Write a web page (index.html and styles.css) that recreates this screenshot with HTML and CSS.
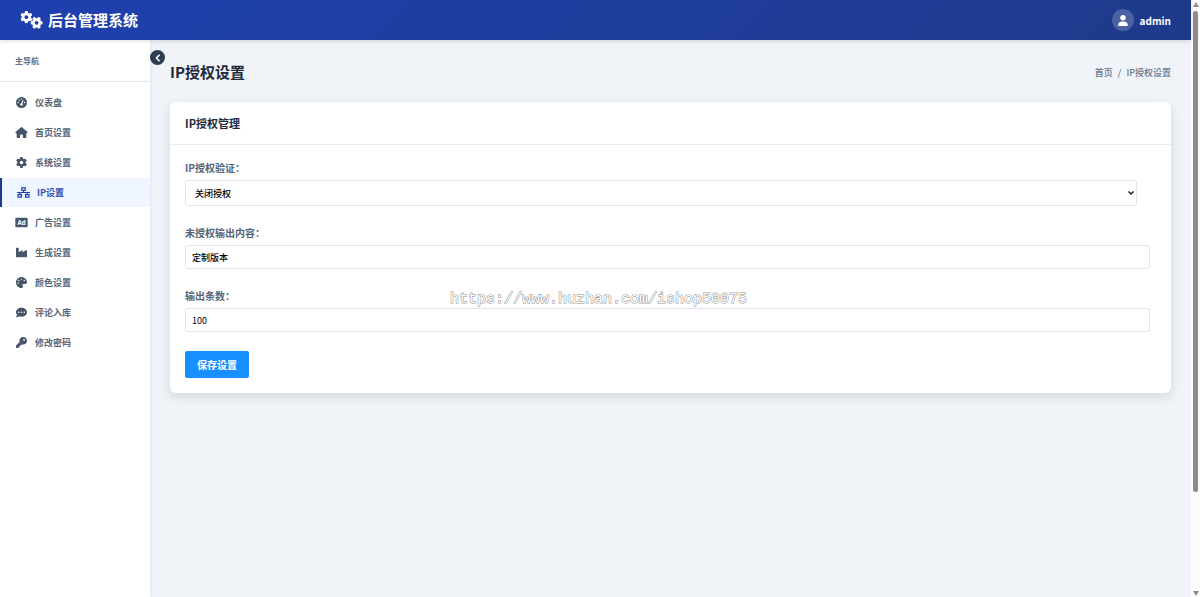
FILE: index.html
```
<!DOCTYPE html>
<html lang="zh-CN">
<head>
<meta charset="utf-8">
<title>IP授权设置 - 后台管理系统</title>
<link rel="stylesheet" href="styles.css">
</head>
<body>
<svg class="defs" aria-hidden="true">
  <symbol id="gear" viewBox="0 0 512 512"><path d="M495.9 166.6c3.2 8.7 .5 18.4-6.4 24.6l-43.3 39.4c1.1 8.3 1.7 16.8 1.7 25.4s-.6 17.1-1.7 25.4l43.3 39.4c6.9 6.2 9.6 15.9 6.4 24.6c-4.4 11.9-9.7 23.3-15.8 34.3l-4.7 8.1c-6.6 11-14 21.4-22.1 31.2c-5.9 7.2-15.7 9.6-24.5 6.8l-55.7-17.7c-13.4 10.3-28.2 18.9-44 25.4l-12.5 57.1c-2 9.1-9 16.3-18.2 17.8c-13.8 2.3-28 3.5-42.5 3.5s-28.7-1.2-42.5-3.5c-9.2-1.5-16.2-8.7-18.2-17.8l-12.5-57.1c-15.8-6.5-30.6-15.1-44-25.4L83.1 425.9c-8.8 2.8-18.6 .3-24.5-6.8c-8.1-9.8-15.5-20.2-22.1-31.2l-4.7-8.1c-6.1-11-11.4-22.4-15.8-34.3c-3.2-8.7-.5-18.4 6.4-24.6l43.3-39.4C64.6 273.1 64 264.6 64 256s.6-17.1 1.7-25.4L22.4 191.2c-6.9-6.2-9.6-15.9-6.4-24.6c4.4-11.9 9.7-23.3 15.8-34.3l4.7-8.1c6.6-11 14-21.4 22.1-31.2c5.9-7.2 15.7-9.6 24.5-6.8l55.7 17.7c13.4-10.3 28.2-18.9 44-25.4l12.5-57.1c2-9.1 9-16.3 18.2-17.8C227.3 1.2 241.5 0 256 0s28.7 1.2 42.5 3.500c9.200 1.500 16.200 8.700 18.200 17.800l12.500 57.100c15.800 6.500 30.600 15.100 44 25.400l55.700-17.700c8.800-2.800 18.600-.3 24.500 6.800c8.100 9.800 15.500 20.200 22.100 31.200l4.700 8.100c6.100 11 11.400 22.400 15.800 34.300zM256 336a80 80 0 1 0 0-160 80 80 0 1 0 0 160z"/></symbol>
</svg>
<div class="window">
  <div class="app">
    <header class="topbar">
      <div class="brand">
        <svg class="brand-icon" viewBox="0 0 640 512" aria-hidden="true">
          <use href="#gear" x="0" y="0" width="350" height="350"/>
          <use href="#gear" x="290" y="162" width="350" height="350" transform="rotate(90 465 337)"/>
        </svg>
        <span>后台管理系统</span>
      </div>
      <div class="user">
        <span class="avatar"><svg viewBox="0 0 448 512" aria-hidden="true"><path d="M224 256A128 128 0 1 0 224 0a128 128 0 1 0 0 256zm-45.7 48C79.8 304 0 383.8 0 452C0 498.7 13.3 512 29.7 512H418.3c16.4 0 29.7-13.3 29.7-60C448 383.8 368.2 304 269.7 304H178.3z"/></svg></span>
        <span>admin</span>
      </div>
    </header>
    <div class="body">
      <aside class="sidebar">
        <div class="nav-title">主导航</div>
        <nav class="nav">
          <a class="nav-link" href="#"><svg viewBox="0 0 512 512" aria-hidden="true"><circle cx="256" cy="256" r="256"/><path class="line" d="M256 350L330 150"/><g class="hole"><circle cx="256" cy="352" r="56"/><circle cx="256" cy="96" r="32"/><circle cx="144" cy="144" r="32"/><circle cx="96" cy="256" r="32"/><circle cx="400" cy="256" r="32"/></g></svg>仪表盘</a>
          <a class="nav-link" href="#"><svg viewBox="0 0 576 512" aria-hidden="true"><path d="M575.8 255.5c0 18-15 32.1-32 32.1h-32l.7 160.2c0 2.7-.2 5.4-.5 8.1V472c0 22.1-17.9 40-40 40H392c-22.1 0-40-17.9-40-40V384c0-17.7-14.3-32-32-32H256c-17.7 0-32 14.3-32 32v88c0 22.1-17.9 40-40 40H104c-22.1 0-40-17.9-40-40V287.6H32c-18 0-32-14-32-32.1c0-9 3-17 10-24L266.4 8c7-7 15-8 22-8s15 2 21 7L564.8 231.5c8 7 12 15 11 24z"/></svg>首页设置</a>
          <a class="nav-link" href="#"><svg viewBox="0 0 512 512" aria-hidden="true"><use href="#gear"/></svg>系统设置</a>
          <a class="nav-link active" href="#" aria-current="page"><svg viewBox="0 0 640 512" aria-hidden="true"><path class="wire" d="M235 30h170v125H235zM50 357h170v125H50zM420 357h170v125H420zM320 155v101M0 256h640M135 256v101M505 256v101"/></svg>IP设置</a>
          <a class="nav-link" href="#"><svg viewBox="0 0 576 512" aria-hidden="true"><rect y="32" width="576" height="448" rx="60"/><text class="ad" x="288" y="360" text-anchor="middle">Ad</text></svg>广告设置</a>
          <a class="nav-link" href="#"><svg viewBox="0 0 512 512" aria-hidden="true"><path d="M24 32H104q24 0 24 24V244L276 146q28-14 28 22V244L464 146q48-20 48 22V450q0 30-30 30H30q-30 0-30-30V56q0-24 24-24z"/></svg>生成设置</a>
          <a class="nav-link" href="#"><svg viewBox="0 0 512 512" aria-hidden="true"><path d="M512 256c0 .9 0 1.8 0 2.7c-.4 36.5-33.6 61.3-70.1 61.3H344c-26.5 0-48 21.5-48 48c0 3.4 .4 6.7 1 9.9c2.1 10.2 6.5 20 10.8 29.9c6.1 13.8 12.1 27.5 12.1 42c0 31.8-21.6 60.7-53.4 62c-3.5 .1-7 .2-10.6 .2C114.6 512 0 397.4 0 256S114.6 0 256 0S512 114.6 512 256zM128 288a32 32 0 1 0-64 0 32 32 0 1 0 64 0zm0-96a32 32 0 1 0 0-64 32 32 0 1 0 0 64zM288 96a32 32 0 1 0-64 0 32 32 0 1 0 64 0zm96 96a32 32 0 1 0 0-64 32 32 0 1 0 0 64z"/></svg>颜色设置</a>
          <a class="nav-link" href="#"><svg viewBox="0 0 512 512" aria-hidden="true"><path d="M256 448c141.4 0 256-93.1 256-208S397.4 32 256 32S0 125.1 0 240c0 45.1 17.7 86.8 47.7 120.9c-1.9 24.5-11.4 46.3-21.4 62.9c-5.5 9.2-11.1 16.6-15.2 21.6c-12 14-8 34.6 4.9 34.6c35 0 80-15 108.7-36.4C162.8 439.1 207.8 448 256 448z"/><g class="hole"><circle cx="128" cy="240" r="34"/><circle cx="256" cy="240" r="34"/><circle cx="384" cy="240" r="34"/></g></svg>评论入库</a>
          <a class="nav-link" href="#"><svg viewBox="0 0 512 512" aria-hidden="true"><path d="M336 352c97.2 0 176-78.8 176-176S433.2 0 336 0S160 78.8 160 176c0 18.7 2.9 36.8 8.3 53.7L7 391c-4.5 4.5-7 10.6-7 17v80c0 13.3 10.7 24 24 24h80c13.3 0 24-10.7 24-24v-40h40c13.3 0 24-10.7 24-24v-40h40c6.400 0 12.500-2.500 17-7l33.300-33.300c16.900 5.400 35 8.300 53.700 8.300zM376 96a40 40 0 1 1 0 80 40 40 0 1 1 0-80z"/></svg>修改密码</a>
        </nav>
        <button class="collapse" type="button" aria-label="收起导航"><svg viewBox="0 0 10 10" aria-hidden="true"><path d="M7 1L3 5L7 9"/></svg></button>
      </aside>
      <main class="content">
        <div class="page-head">
          <h1>IP授权设置</h1>
          <div class="crumbs"><a href="#">首页</a><span>/</span><span>IP授权设置</span></div>
        </div>
        <section class="card">
          <h2>IP授权管理</h2>
          <form class="form">
            <div class="field">
              <label for="auth">IP授权验证：</label>
              <select id="auth"><option>关闭授权</option><option>开启授权</option></select>
            </div>
            <div class="field">
              <label for="msg">未授权输出内容：</label>
              <input id="msg" type="text" value="定制版本">
            </div>
            <div class="field">
              <label for="num">输出条数：</label>
              <input id="num" class="number" type="text" inputmode="numeric" value="100">
            </div>
            <button class="save" type="button">保存设置</button>
          </form>
        </section>
      </main>
    </div>
  </div>
  <div class="scrollbar" aria-hidden="true">
    <svg viewBox="0 0 8 6"><path d="M4 0L7 5H1z"/></svg>
    <div class="track"><div class="thumb"></div></div>
    <svg viewBox="0 0 8 6"><path d="M1 1H7L4 6z"/></svg>
  </div>
</div>
<div class="watermark">https://www.huzhan.com/ishop50075</div>
</body>
</html>
```
FILE: styles.css
```
* { box-sizing: border-box; }
body {
  margin: 0;
  font-family: "Noto Sans CJK SC", "Noto Sans", sans-serif;
  font-size: 9px;
  font-weight: 500;
  color: #1e293b;
  background: #f0f4f9;
}
a { color: inherit; text-decoration: none; }
h1, h2 { margin: 0; font-weight: 700; }
.defs { position: absolute; width: 0; height: 0; }
.window { display: flex; height: 100vh; }
.app { flex: 1; display: flex; flex-direction: column; min-width: 0; }

.topbar {
  display: flex;
  align-items: center;
  justify-content: space-between;
  height: 40px;
  padding: 0 20px;
  color: #fff;
  background: linear-gradient(135deg, #1e40af, #1e3a8a);
  box-shadow: 0 1px 4px rgba(0, 0, 0, .15);
  z-index: 1;
}
.brand { display: flex; align-items: center; gap: 5px; font-size: 15px; line-height: 20px; font-weight: 700; }
.brand-icon { width: 23px; height: 18px; fill: #fff; }
.user { display: flex; align-items: center; gap: 6px; font-size: 10px; font-weight: 700; }
.avatar {
  display: flex;
  align-items: center;
  justify-content: center;
  width: 22px;
  height: 22px;
  border-radius: 50%;
  background: rgba(255, 255, 255, .2);
}
.avatar svg { width: 10px; height: 11px; fill: #fff; }

.body { flex: 1; display: flex; min-height: 0; }
.sidebar {
  position: relative;
  width: 150px;
  background: #fff;
  box-shadow: 1px 0 4px rgba(0, 0, 0, .06);
}
.nav-title {
  padding: 14px 15px;
  border-bottom: 1px solid #e2e8f0;
  font-size: 8px;
  line-height: 13px;
  font-weight: 700;
  color: #64748b;
}
.nav { display: flex; flex-direction: column; gap: 1px; padding-top: 6px; }
.nav-link {
  display: flex;
  align-items: center;
  gap: 7px;
  height: 29px;
  padding-left: 15px;
  font-size: 9px;
  font-weight: 700;
  color: #56657a;
}
.nav-link svg { width: 13px; height: 11px; fill: #475569; }
.nav-link.active { border-left: 2px solid #1e3a8a; color: #2f4fb5; background: #eff6ff; }
.hole { fill: #fff; }
.line { stroke: #fff; stroke-width: 50; }
.wire { fill: none; stroke: #1e40af; stroke-width: 58; }
.ad { fill: #fff; font: 700 290px "Noto Sans", sans-serif; }
.collapse {
  position: absolute;
  top: 10px;
  right: -15px;
  display: flex;
  align-items: center;
  justify-content: center;
  width: 15px;
  height: 15px;
  padding: 0;
  border: 0;
  border-radius: 50%;
  background: #2c3e50;
}
.collapse svg { width: 8px; height: 8px; fill: none; stroke: #fff; stroke-width: 2; }

.content { flex: 1; min-width: 0; padding: 20px; }
.page-head { display: flex; align-items: center; justify-content: space-between; margin-bottom: 18px; }
.page-head h1 { font-size: 15px; line-height: 24px; }
.crumbs { display: flex; gap: 5px; font-size: 9px; color: #64748b; }
.card {
  border-radius: 6px;
  background: #fff;
  box-shadow: 0 4px 12px rgba(0, 0, 0, .12);
}
.card h2 {
  padding: 13px 15px;
  border-bottom: 1px solid #e9edf3;
  font-size: 11px;
  line-height: 16px;
}
.form { padding: 15px 21px 15px 15px; }
.field { display: flex; flex-direction: column; margin-bottom: 19px; }
.field label { margin-bottom: 4px; font-size: 10px; line-height: 16px; font-weight: 700; color: #566478; }
.field input, .field select {
  height: 24px;
  padding: 0 6px;
  border: 1px solid #e2e4e8;
  border-radius: 3px;
  background: #fff;
  color: #000;
  font: inherit;
}
.field .number { font-weight: 400; }
.field select {
  appearance: none;
  height: 26px;
  margin-right: 13px;
  padding: 0 9px;
  background: #fff url("data:image/svg+xml,%3Csvg xmlns='http://www.w3.org/2000/svg' viewBox='0 0 6 4'%3E%3Cpath d='M.5 .5L3 3L5.500 .5' fill='none' stroke='%23111' stroke-width='1.300'/%3E%3C/svg%3E") no-repeat right 2px center / 6px 4px;
}
.save {
  height: 27px;
  padding: 0 12px;
  border: 0;
  border-radius: 2px;
  background: #1890ff;
  color: #fff;
  font: inherit;
  font-size: 10px;
  font-weight: 700;
}

.scrollbar {
  display: flex;
  flex-direction: column;
  align-items: center;
  width: 9px;
  padding: 2px 0 1px;
  background: #fcfcfc;
}
.scrollbar svg { width: 8px; height: 6px; fill: #8b8b8b; }
.track { flex: 1; padding-top: 3px; }
.thumb { width: 5px; height: 83%; border-radius: 3px; background: #8b8b8b; }

.watermark {
  position: absolute;
  top: 290px;
  left: 450px;
  font-family: "Liberation Mono", monospace;
  font-size: 15px;
  line-height: 20px;
  color: #fff;
  -webkit-text-stroke: 1px #8c8c8c;
  paint-order: stroke fill;
  pointer-events: none;
}
```
